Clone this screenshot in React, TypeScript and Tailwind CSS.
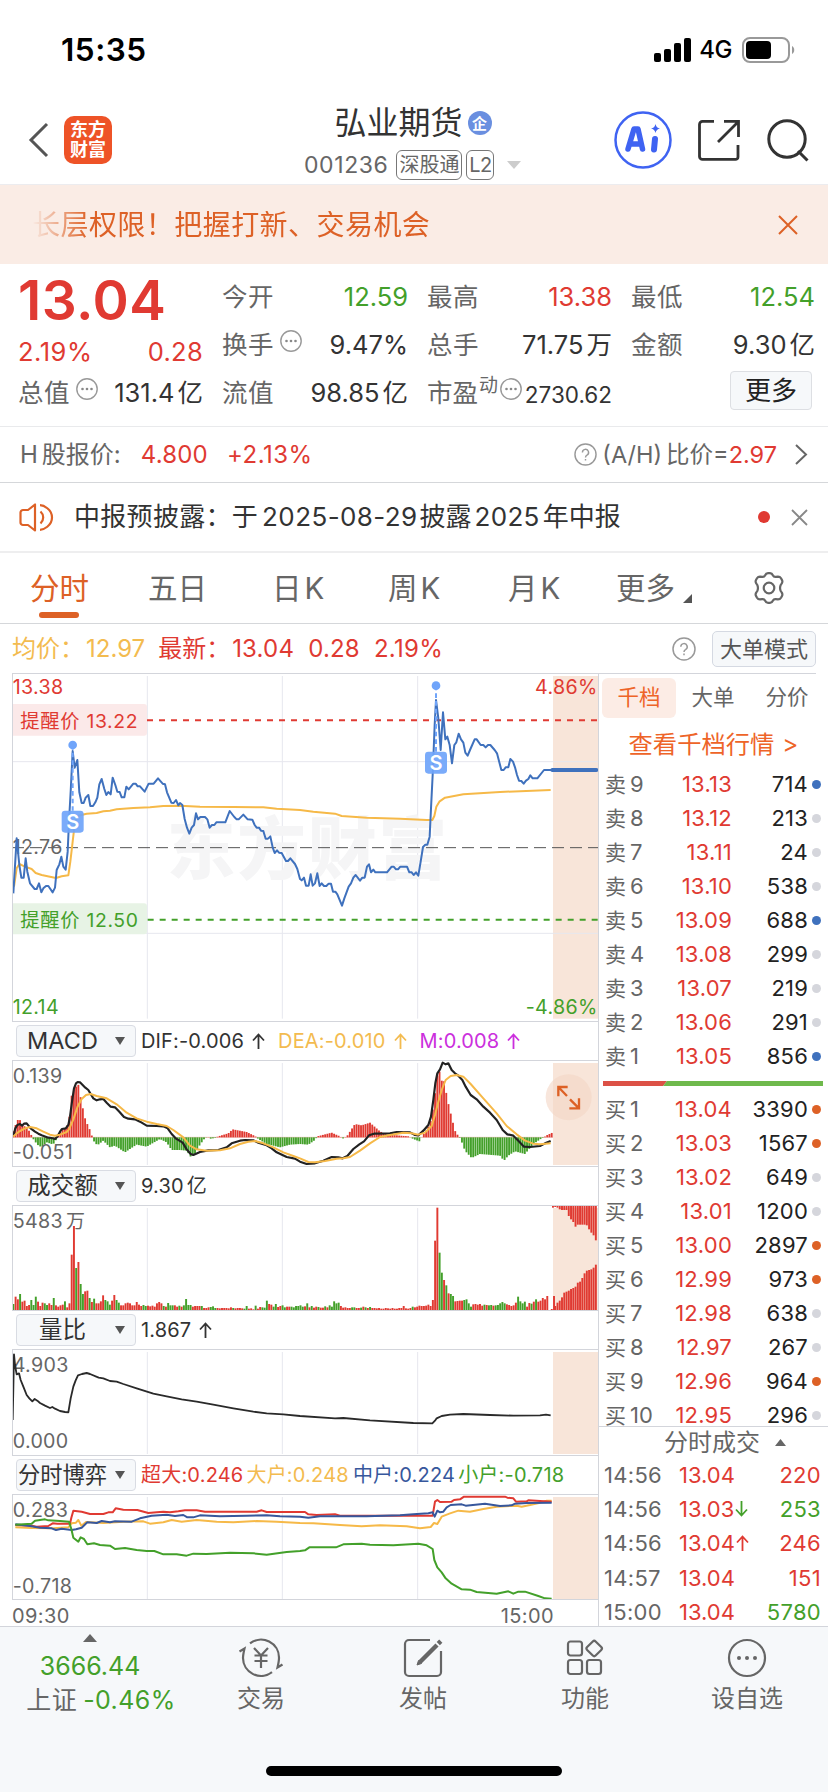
import type { ReactNode } from "react";
import clsx from "clsx";

const ORANGE = "#dd6126";
const RED = "#e03a32";
const GREEN = "#43a02a";
const BLUE = "#3f71bd";
const YELLOW = "#f6b948";
const LINE = "#e6e7ee";

const SELLS = [
  ["9", "13.13", "714", "b"],
  ["8", "13.12", "213", "g"],
  ["7", "13.11", "24", "g"],
  ["6", "13.10", "538", "g"],
  ["5", "13.09", "688", "b"],
  ["4", "13.08", "299", "g"],
  ["3", "13.07", "219", "g"],
  ["2", "13.06", "291", "g"],
  ["1", "13.05", "856", "b"],
];

const BUYS = [
  ["1", "13.04", "3390", "o"],
  ["2", "13.03", "1567", "o"],
  ["3", "13.02", "649", "g"],
  ["4", "13.01", "1200", "g"],
  ["5", "13.00", "2897", "o"],
  ["6", "12.99", "973", "o"],
  ["7", "12.98", "638", "g"],
  ["8", "12.97", "267", "g"],
  ["9", "12.96", "964", "o"],
  ["10", "12.95", "296", "g"],
];

const TRADES = [
  { time: "14:56", price: "13.04", dir: "", vol: "220", up: true },
  { time: "14:56", price: "13.03", dir: "down", vol: "253", up: false },
  { time: "14:56", price: "13.04", dir: "up", vol: "246", up: true },
  { time: "14:57", price: "13.04", dir: "", vol: "151", up: true },
  { time: "15:00", price: "13.04", dir: "", vol: "5780", up: false },
];

// Chart series use 3 units per CSS pixel.
const PRICE =
  "40,685 50,520 54,560 58,600 64,638 71,638 77,580 82,620 90,655 104,672 110,672 117,655 124,682 130,670 138,663 145,663 158,682 165,668 170,615 178,598 184,575 190,605 197,614 203,560 207,470 212,380 218,258 224,308 232,285 238,382 245,414 251,414 257,398 265,390 271,423 279,423 286,412 292,398 298,358 305,342 313,372 319,390 325,381 332,388 338,338 346,360 352,380 359,381 365,397 373,397 379,365 386,373 400,356 407,356 413,364 420,364 434,380 446,356 461,356 474,340 488,356 495,358 501,382 514,413 521,414 528,405 535,421 540,414 547,420 554,462 561,488 568,506 575,488 582,480 588,445 594,463 601,456 615,456 622,463 629,488 636,480 643,480 649,472 676,472 689,438 703,456 710,463 716,463 730,449 743,463 757,464 764,480 770,488 777,488 783,497 790,498 797,521 804,521 811,514 818,547 824,564 831,556 837,563 845,564 858,588 864,588 871,580 885,597 892,612 900,642 905,646 912,638 918,662 926,662 932,628 938,662 945,655 952,625 959,663 965,655 972,663 979,663 986,656 993,656 999,680 1006,680 1012,688 1026,722 1033,700 1046,665 1053,655 1060,638 1067,630 1080,647 1087,638 1094,638 1101,605 1107,598 1113,622 1120,614 1126,622 1161,622 1175,605 1181,605 1188,613 1194,613 1201,605 1221,605 1228,622 1235,622 1241,630 1248,622 1255,632 1262,590 1269,546 1276,539 1282,539 1289,515 1293,430 1298,330 1304,180 1308,105 1315,160 1322,255 1329,142 1336,223 1342,215 1349,240 1356,295 1363,240 1369,232 1376,206 1383,223 1390,233 1396,263 1403,272 1410,255 1424,223 1430,223 1442,240 1450,240 1457,247 1464,240 1471,240 1484,255 1491,265 1504,315 1511,315 1517,307 1525,307 1531,282 1539,290 1545,307 1551,330 1557,347 1564,348 1571,356 1578,347 1585,342 1591,331 1598,340 1612,340 1632,315 1655,315";

const AVERAGE =
  "42,665 50,610 58,597 75,605 95,612 107,624 125,630 150,635 168,639 185,634 205,631 211,590 218,530 225,470 235,452 260,446 290,444 310,439 330,437 350,433 400,429 450,427 490,423 540,422 600,425 700,426 790,427 830,431 900,435 940,440 1005,446 1025,453 1100,458 1200,461 1280,465 1297,465 1303,453 1309,425 1318,410 1335,398 1390,388 1500,381 1652,375";

const DIF =
  "40,348 46,325 52,315 60,312 66,317 72,311 80,310 92,325 105,335 115,341 125,346 145,353 155,354 165,357 172,350 180,335 186,327 197,325 205,315 210,290 216,245 222,205 228,190 233,186 240,187 248,195 256,203 265,210 272,222 280,235 290,241 300,238 310,237 320,248 332,260 345,262 358,275 372,291 385,296 405,298 420,305 440,317 470,318 490,319 503,325 515,342 527,355 548,368 560,388 572,402 580,405 600,396 625,391 655,390 680,382 695,370 720,362 735,360 760,361 775,368 800,376 815,385 830,397 860,411 885,416 900,425 920,432 945,430 970,422 995,411 1015,412 1028,415 1042,408 1060,387 1078,373 1092,364 1107,346 1122,341 1170,340 1190,336 1230,337 1245,345 1255,346 1270,332 1285,315 1293,290 1300,240 1306,190 1312,160 1320,148 1328,128 1337,133 1345,130 1355,150 1365,160 1375,167 1387,180 1397,200 1412,225 1430,238 1450,260 1470,278 1490,300 1508,330 1522,343 1540,347 1555,362 1572,380 1590,381 1620,378 1635,370 1652,363";

const DEA =
  "40,350 50,340 60,333 75,325 90,321 110,325 130,335 150,344 165,347 180,344 200,336 207,328 220,298 232,262 245,237 258,225 272,222 290,228 320,235 350,253 380,278 410,295 440,305 470,312 500,318 520,330 550,352 570,377 590,388 620,392 660,391 690,385 720,372 745,365 765,363 790,370 820,382 850,397 880,408 900,415 925,426 945,427 975,423 1010,416 1030,415 1050,411 1080,392 1110,370 1140,351 1170,345 1210,338 1235,340 1255,344 1275,338 1295,318 1305,285 1315,245 1325,210 1337,180 1352,168 1370,165 1390,170 1412,192 1450,235 1490,280 1520,318 1550,343 1575,362 1600,371 1620,373 1652,370";

// Histogram outline: x and signed height, positive is above the zero line.
const HIST: [number, number][] = [
  [40, 18], [52, 52], [60, 52], [70, 35], [80, 30], [87, 20], [95, 5], [100, -5], [112, -22], [125, -30], [140, -15], [155, -20],
  [165, -18], [172, 5], [180, 15], [190, 25], [200, 30], [208, 60], [215, 125], [221, 142], [228, 152], [236, 158], [241, 125], [248, 90],
  [255, 58], [262, 40], [270, 22], [276, 4], [282, -12], [292, -24], [310, -10], [330, -30], [345, -25], [375, -45], [390, -35],
  [410, -22], [440, -28], [480, -5], [500, -15], [515, -38], [540, -38], [560, -40], [572, -58], [585, -50], [600, -22], [615, -2],
  [625, 1], [632, -4], [645, -2], [655, 3], [685, 12], [698, 24], [740, 16], [765, 4], [775, -5], [800, -20], [840, -30], [870, -22],
  [900, -20], [925, -22], [945, -8], [952, 3], [995, 14], [1020, 3], [1028, -4], [1035, 0], [1042, 5], [1065, 40], [1085, 36], [1110, 44],
  [1140, 18], [1160, 8], [1190, 6], [1225, 3], [1240, -5], [1258, -12], [1265, 0], [1275, 15], [1290, 40], [1298, 80], [1304, 120],
  [1310, 180], [1318, 200], [1325, 170], [1333, 168], [1342, 115], [1355, 60], [1365, 20], [1375, 4], [1382, -5], [1395, -40],
  [1415, -62], [1440, -50], [1500, -55], [1512, -70], [1525, -55], [1545, -42], [1575, -50], [1600, -20], [1625, -3], [1632, 0],
  [1640, 6], [1657, 14],
];

const VOLUME =
  "g18 r40 r32 g48 r25 r28 r12 r15 g30 g15 g40 r25 r12 r22 g20 g15 r20 r15 g36 r14 r10 r14 r16 g26 r8 r20 r166 r252 g126 r144 g78 g48 r56 r58 g36 r24 g34 r20 r20 r26 r44 g30 g26 g16 r28 r45 g30 g22 r14 r14 r20 r22 r20 r14 r14 r24 r16 r12 g15 g12 " +
  "r13 r11 r13 r10 r20 r24 r20 g12 r10 g21 g14 g14 r14 r10 g13 r10 g14 g33 g15 g15 r10 r12 r12 r12 g12 r6 r6 r8 g9 g11 g6 r6 r5 r6 r6 r6 r5 r8 g6 r5 r6 r6 r5 g4 g12 r4 r5 r2 g13 r4 r9 g8 g7 g28 r18 r16 g10 g18 r9 r12 g14 g8 r10 r10 g10 g8 g12 g12 g14 " +
  "g10 r11 g20 r8 g12 r7 r10 g9 r7 r7 g11 r8 g14 g10 g26 g20 g22 r12 r7 r8 r6 r6 g8 g8 r6 r6 g7 r10 g8 r6 g9 r6 r6 r5 r6 r4 r4 r6 r5 r4 r6 r4 r4 r6 r6 r12 r5 r4 r6 g10 r8 r10 r13 r12 r12 r13 r16 r12 r30 r208 r307 g172 g112 r90 g74 r50 g48 g42 r26 r27 r28 r28 g30 g32 g20 g10 r17 r18 r16 r18 r13 " +
  "g16 r15 g14 g15 r13 g14 g15 g20 g24 g20 r17 r15 r12 r14 r22 g40 g26 g20 g25 r10 r21 g19 r25 g32 r25 r28 r36 r32 r42 r0 r3 r42";

const AUCTION_TOP = [5, 3, 5, 10, 12, 12, 12, 30, 40, 48, 62, 56, 56, 56, 56, 58, 70, 80, 88, 103];
const AUCTION_BOTTOM = [12, 22, 28, 38, 52, 55, 58, 63, 66, 70, 82, 85, 96, 110, 118, 120, 122, 127, 136];

const RATIO =
  "38,315 40,220 42,118 45,150 50,178 57,175 62,195 70,215 80,240 88,250 97,259 104,252 112,257 120,264 135,272 150,279 157,276 165,281 180,288 195,291 205,292 212,250 220,215 227,196 234,181 246,177 260,174 270,177 296,188 310,190 330,198 350,200 370,207 410,220 460,236 500,244 545,253 590,260 640,269 700,280 760,290 800,295 850,298 900,303 1005,310 1030,309 1110,316 1240,324 1297,325 1305,317 1310,310 1325,303 1350,299 1390,297 1470,300 1540,302 1620,301 1638,299 1652,301";

const HUGE =
  "46,630 95,632 110,635 145,633 158,625 172,626 210,626 214,608 220,587 245,590 270,597 310,597 325,592 338,592 347,580 370,584 412,585 445,594 470,592 490,590 510,592 535,589 555,586 590,586 615,590 770,590 785,586 800,591 915,591 925,598 950,600 1005,598 1020,602 1298,602 1305,560 1312,555 1320,561 1355,560 1362,555 1380,553 1392,545 1515,545 1522,548 1540,550 1548,560 1580,559 1585,556 1655,560";
const MIDDLE =
  "46,628 90,633 120,638 155,640 168,645 185,641 215,645 228,643 245,638 262,622 290,624 305,618 330,622 345,619 395,620 420,610 455,602 500,599 525,603 550,600 562,607 580,607 600,601 660,604 740,602 800,601 840,604 900,605 925,608 960,604 1100,604 1200,601 1240,598 1285,595 1298,592 1304,605 1312,587 1320,592 1330,590 1340,577 1352,570 1385,568 1397,572 1455,566 1500,573 1535,571 1545,566 1580,564 1655,563";
const BIG =
  "46,637 95,639 160,640 205,637 215,625 228,623 235,615 244,632 258,621 310,624 370,620 430,619 450,626 490,622 515,615 545,620 590,615 650,620 700,622 770,618 830,620 900,624 940,625 1020,630 1085,634 1140,631 1220,634 1260,640 1292,636 1302,624 1312,627 1325,605 1350,595 1375,587 1410,590 1450,582 1490,575 1550,572 1565,575 1590,570 1620,563 1640,557 1655,557";
const SMALL =
  "46,629 95,626 105,617 135,613 145,616 180,618 207,620 214,642 220,668 235,680 242,667 252,672 262,688 282,685 300,690 330,692 345,702 375,699 410,705 440,708 463,708 490,718 530,718 560,722 580,716 620,717 690,713 760,715 800,719 860,711 900,708 915,706 928,697 1008,697 1030,688 1085,686 1110,689 1180,691 1255,686 1280,691 1298,702 1303,735 1312,757 1325,772 1337,790 1355,806 1385,823 1410,824 1430,831 1490,836 1525,829 1540,836 1555,830 1575,830 1615,843 1635,850 1655,851";

function histAt(x: number) {
  for (let i = 1; i < HIST.length; i++) {
    const [x0, h0] = HIST[i - 1];
    const [x1, h1] = HIST[i];
    if (x <= x1) return h0 + ((h1 - h0) * (x - x0)) / (x1 - x0);
  }
  return 0;
}

const Line = ({ points, color, width = 5 }: { points: string; color: string; width?: number }) => (
  <polyline points={points} fill="none" stroke={color} strokeWidth={width} strokeLinejoin="round" />
);

const Label = ({ x, y, fill = "#666", end, children }: { x: number; y: number; fill?: string; end?: boolean; children: ReactNode }) => (
  <text x={x} y={y} fill={fill} fontSize={59} letterSpacing={1} textAnchor={end ? "end" : "start"}>
    {children}
  </text>
);

// Vertical grid lines and the shaded after-hours strip, shared by every panel.
const Grid = ({ top, height }: { top: number; height: number }) => (
  <>
    <rect x={1659} y={top} width={135} height={height} fill="#f8e5d9" />
    {[442, 847, 1253].map((x) => (
      <line key={x} x1={x} x2={x} y1={top} y2={top + height} stroke={LINE} strokeWidth={3} />
    ))}
  </>
);

const Marker = ({ x, dot, top }: { x: number; dot: number; top: number }) => (
  <g>
    <line x1={x} x2={x} y1={dot} y2={top} stroke="#6fa4fa" strokeWidth={6} strokeDasharray="14 9" />
    <circle cx={x} cy={dot} r={13} fill="#6fa4fa" />
    <rect x={x - 33} y={top} width={66} height={66} rx={10} fill="#6fa4fa" opacity={0.92} />
    <text x={x} y={top + 54} textAnchor="middle" fontSize={60} fontWeight={600} fill="#fff">S</text>
  </g>
);

const PriceChart = () => (
  <svg viewBox="39 27 1755 1041" className="block h-[347px] w-[585px]">
    <Grid top={33} height={1028} />
    <text x={500} y={626} fontSize={206} fontWeight={900} letterSpacing={6} fill="#f5f5f6">东方财富</text>
    <line x1={39} x2={1794} y1={290} y2={290} stroke={LINE} strokeWidth={3} />
    <line x1={39} x2={1794} y1={805} y2={805} stroke={LINE} strokeWidth={3} />
    <line x1={36} x2={1794} y1={548} y2={548} stroke="#555" strokeWidth={3} strokeDasharray="36 18" />
    <line x1={441} x2={1794} y1={166} y2={166} stroke={RED} strokeWidth={6} strokeDasharray="18 18" />
    <line x1={443} x2={1794} y1={764} y2={764} stroke={GREEN} strokeWidth={6} strokeDasharray="18 18" />
    <rect x={30} y={117} width={411} height={95} rx={9} fill="#fbe9e9" />
    <rect x={30} y={715} width={411} height={93} rx={9} fill="#e7f3e5" />
    <text x={61} y={188} fontSize={58} letterSpacing={2} fill={RED}>提醒价 13.22</text>
    <text x={61} y={787} fontSize={58} letterSpacing={2} fill={GREEN}>提醒价 12.50</text>
    <Label x={38} y={87} fill={RED}>13.38</Label>
    <Label x={38} y={1046} fill={GREEN}>12.14</Label>
    <Label x={1793} y={87} fill={RED} end>4.86%</Label>
    <Label x={1793} y={1046} fill={GREEN} end>-4.86%</Label>
    <Label x={38} y={567}>12.76</Label>
    <Line points={AVERAGE} color={YELLOW} width={6} />
    <Line points={PRICE} color={BLUE} width={6} />
    <line x1={1657} x2={1789} y1={315} y2={315} stroke={BLUE} strokeWidth={12} strokeLinecap="round" />
    <Marker x={218} dot={240} top={437} />
    <Marker x={1308} dot={62} top={260} />
  </svg>
);

const MacdChart = () => (
  <svg viewBox="39 123 1755 315" className="block h-[105px] w-[585px]">
    <Grid top={129} height={306} />
    <line x1={39} x2={1659} y1={352} y2={352} stroke="#eba9a0" strokeWidth={2} />
    {Array.from({ length: 241 }, (_, i) => {
      const x = 40 + i * 6.73;
      const h = histAt(x);
      return (
        <rect key={i} x={x - 2.9} y={h > 0 ? 352 - h : 352} width={5.6} height={Math.abs(h)} fill={h > 0 ? RED : GREEN} />
      );
    })}
    <Label x={38} y={189}>0.139</Label>
    <Label x={38} y={417}>-0.051</Label>
    <Line points={DIF} color="#222" width={6.5} />
    <Line points={DEA} color={YELLOW} width={6} />
    <circle cx={1706} cy={232} r={69} fill="#f3d5c4" opacity={0.6} />
    <path d="M1703 201h-28v28M1675 201l26 27M1737 235v30h-29M1737 265l-27-27" fill="none" stroke={ORANGE} strokeWidth={7} />
  </svg>
);

const VolumeChart = () => (
  <svg viewBox="39 558 1755 312" className="block h-[104px] w-[585px]">
    <Grid top={564} height={306} />
    <Label x={38} y={623}>5483</Label>
    <text x={198} y={623} fontSize={57} fill="#666">万</text>
    {VOLUME.split(" ").map((bar, i) => {
      const h = Number(bar.slice(1));
      return <rect key={i} x={37.2 + i * 6.73} y={870 - h} width={5.8} height={h} fill={bar[0] === "r" ? RED : GREEN} />;
    })}
    {AUCTION_TOP.map((h, i) => (
      <rect key={i} x={1656 + i * 6.77} y={558} width={5.8} height={h} fill={RED} />
    ))}
    {AUCTION_BOTTOM.map((h, i) => (
      <rect key={i} x={1662.8 + i * 6.77} y={870 - h} width={5.8} height={h} fill={RED} />
    ))}
  </svg>
);

const RatioChart = () => (
  <svg viewBox="39 105 1755 315" className="block h-[105px] w-[585px]">
    <Grid top={111} height={306} />
    <Label x={38} y={171}>4.903</Label>
    <Label x={38} y={399}>0.000</Label>
    <Line points={RATIO} color="#2a2a2a" width={5.5} />
  </svg>
);

const GameChart = () => (
  <svg viewBox="39 540 1755 312" className="block h-[104px] w-[585px]">
    <Grid top={546} height={306} />
    <Label x={38} y={605}>0.283</Label>
    <Label x={38} y={833}>-0.718</Label>
    <Line points={BIG} color={YELLOW} width={6} />
    <Line points={HUGE} color={RED} width={6} />
    <Line points={MIDDLE} color="#37579c" width={6} />
    <Line points={SMALL} color={GREEN} width={6} />
  </svg>
);

const StatusBar = () => (
  <div className="flex h-[88px] items-center justify-between pt-[12px] pl-[61px] pr-[32px] text-black">
    <span className="text-[31.500px] font-semibold tracking-[0.500px]">15:35</span>
    <div className="flex items-center">
      <svg width="37" height="24" viewBox="0 0 37 24">
        <rect x="0" y="15" width="7" height="9" rx="2" />
        <rect x="10" y="11" width="7" height="13" rx="2" />
        <rect x="20" y="5" width="7" height="19" rx="2" />
        <rect x="30" y="0" width="7" height="24" rx="2" />
      </svg>
      <span className="ml-2 text-[24px] font-medium tracking-[-0.5px]">4G</span>
      <svg className="ml-[10px]" width="54" height="26" viewBox="0 0 54 26">
        <rect x="1" y="1" width="46" height="24" rx="7" fill="none" stroke="#999" strokeWidth="2" />
        <rect x="4" y="4" width="25" height="18" rx="4" />
        <path d="M50 9c3 1.500 3 6.500 0 8z" fill="#999" />
      </svg>
    </div>
  </div>
);

const Header = () => (
  <header className="grid h-[97px] grid-cols-[1fr_236px_1fr] border-b border-[#ececef]">
    <div className="flex items-center pl-[28px] pt-[8px]">
      <svg width="21" height="36" viewBox="0 0 21 36" fill="none" stroke="#555" strokeWidth="3">
        <path d="M19 2L3 18l16 16" />
      </svg>
      <div className="ml-[15px] grid h-[48px] w-[48px] place-content-center rounded-[10px] bg-[#ee5327] text-center text-[18px] font-bold leading-[20px] text-white">
        <span>东方</span>
        <span>财富</span>
      </div>
    </div>
    <div className="flex flex-col items-center pt-[18px]">
      <div className="flex h-[34px] items-center pr-[2px] text-[32px] text-[#333]">
        弘业期货
        <span className="ml-[5px] grid h-6 w-6 place-content-center rounded-full bg-[#6a8fe0] text-[15px] font-bold text-white">企</span>
      </div>
      <div className="mt-[10px] flex h-[30px] w-[220px] items-center text-[23px] text-[#666]">
        <span className="tracking-[0.600px]">001236</span>
        <span className="ml-[8px] grid h-[30px] w-[66px] place-content-center rounded-[6px] border border-[#777] text-[20px]">深股通</span>
        <span className="ml-1 grid h-[30px] w-[28px] place-content-center rounded-[6px] border border-[#777] text-[20px] tracking-[-0.5px]">L2</span>
        <svg className="ml-[13px]" width="14" height="8" viewBox="0 0 14 8"><path d="M0 0h14L7 8z" fill="#ccc" /></svg>
      </div>
    </div>
    <div className="flex items-center justify-end pr-[18px] pt-[8px]">
      <svg width="58" height="58" viewBox="0 0 58 58">
        <circle cx="29" cy="29" r="27.500" fill="none" stroke="#3f63f2" strokeWidth="2.500" />
        <g fill="none" stroke="#3f63f2" strokeWidth="5.500" strokeLinecap="round" strokeLinejoin="round">
          <path d="M14 38l6-20h4l4.500 20M16.500 33h10" />
          <path d="M41 28l-1 10.500" strokeWidth="6" />
        </g>
        <path d="M41.500 13q.8 4 4.500 4.500-3.700.8-4.500 4.500-.8-3.700-4.500-4.500 3.700-.5 4.500-4.500z" fill="#3f63f2" />
      </svg>
      <svg className="ml-[26px]" width="42" height="42" viewBox="0 0 42 42" fill="none" stroke="#333" strokeWidth="2.800">
        <path d="M16 2.400H4.500a3 3 0 0 0-3 3v32a3 3 0 0 0 3 3h33a2.500 2.500 0 0 0 2.500-2.500V26M26 2.400h14.500V18M39.500 3.500L20 23" />
      </svg>
      <svg className="ml-[27px]" width="43" height="43" viewBox="0 0 43 43" fill="none" stroke="#333" strokeWidth="3">
        <circle cx="20" cy="20" r="18.200" />
        <path d="M31 32l9.500 9.500" />
      </svg>
    </div>
  </header>
);

const Banner = () => (
  <div className="flex h-[79px] items-center justify-between bg-[#faece5] pl-[32px] pr-[30px]">
    <span className="text-[28px] tracking-[0.450px] text-[#dd6126] [mask-image:linear-gradient(to_right,transparent,black_56px)]">
      长层权限！把握打新、交易机会
    </span>
    <svg width="20" height="20" viewBox="0 0 20 20" stroke={ORANGE} strokeWidth="2"><path d="M1 1l18 18M19 1L1 19" /></svg>
  </div>
);

const Dots = ({ className }: { className?: string }) => (
  <svg className={clsx("shrink-0", className)} width="22" height="22" viewBox="0 0 22 22">
    <circle cx="11" cy="11" r="10.200" fill="none" stroke="#999" strokeWidth="1.400" />
    <circle cx="6.500" cy="11" r="1.300" fill="#888" />
    <circle cx="11" cy="11" r="1.300" fill="#888" />
    <circle cx="15.500" cy="11" r="1.300" fill="#888" />
  </svg>
);

const Stat = ({ label, value, unit, tone = "text-[#333]", info }: { label: string; value: string; unit?: string; tone?: string; info?: boolean }) => (
  <div className="flex h-[48px] items-center whitespace-nowrap">
    <span className="tracking-[0.400px] text-[#666]">{label}</span>
    {info && <Dots className="mb-[9px] ml-[6px]" />}
    <span className={clsx("ml-auto", tone)}>
      {value}
      {unit && <span className="ml-[3px]">{unit}</span>}
    </span>
  </div>
);

const Quote = () => (
  <section className="flex h-[163px] border-b border-[#e9eaec] pl-[18px] text-[25.500px]">
    <div className="w-[185px] text-[#e03a32]">
      <div className="flex h-[72px] items-center text-[55px] font-semibold tracking-[0.500px]">13.04</div>
      <div className="flex h-[32px] items-center justify-between">
        <span className="tracking-[0.500px]">2.19%</span>
        <span className="tracking-[0.300px]">0.28</span>
      </div>
      <div className="pt-[1px]">
        <Stat label="总值" value="131.4" unit="亿" info />
      </div>
    </div>
    <div className="ml-[19px] grid h-[153px] grid-cols-[186px_185px_184px] content-start gap-x-[19px] pt-[9px]">
      <Stat label="今开" value="12.59" tone="text-[#43a02a]" />
      <Stat label="最高" value="13.38" tone="text-[#e03a32]" />
      <Stat label="最低" value="12.54" tone="text-[#43a02a]" />
      <Stat label="换手" value="9.47%" info />
      <Stat label="总手" value="71.75" unit="万" />
      <Stat label="金额" value="9.30" unit="亿" />
      <Stat label="流值" value="98.85" unit="亿" />
      <div className="flex h-[48px] items-center whitespace-nowrap text-[#666]">
        市盈<span className="mb-[16px] ml-[1px] text-[19px]">动</span>
        <Dots className="mb-[9px] ml-[2px]" />
        <span className="ml-auto pt-1 text-[22.500px] text-[#333]">2730.62</span>
      </div>
      <div className="flex h-[43px] items-center justify-end pr-[3px]">
        <button className="h-[39px] w-[82px] rounded-[4px] border border-[#dddfe3] bg-[#f6f8fa] text-[26px] leading-none text-[#222]">更多</button>
      </div>
    </div>
  </section>
);

const Help = ({ size }: { size: number }) => (
  <svg width={size} height={size} viewBox="0 0 24 24" fill="none" stroke="#999" strokeWidth="1.500">
    <circle cx="12" cy="12" r="11" />
    <path d="M8.800 9.800a3.200 3.200 0 1 1 4.700 2.800c-1 .5-1.500 1-1.500 2.400M12 16.600v1.700" />
  </svg>
);

const HShare = () => (
  <div className="flex h-[56px] items-center border-b border-[#d5d7da] pl-[20px] pr-[20px] text-[24px] text-[#666]">
    <span className="mr-1">H</span>股报价:
    <span className="ml-[20px] tracking-[0.200px] text-[#e03a32]">4.800</span>
    <span className="ml-[19px] tracking-[0.500px] text-[#e03a32]">+2.13%</span>
    <span className="ml-auto flex items-center text-[23.500px]">
      <Help size={23} />
      <span className="ml-[5px]">(A/H)</span>
      <span className="ml-[4px]">比价=<span className="text-[#e03a32]">2.97</span></span>
    </span>
    <svg className="ml-[18px]" width="13" height="21" viewBox="0 0 13 21" fill="none" stroke="#666" strokeWidth="2"><path d="M1 1l10 9.500L1 20" /></svg>
  </div>
);

const News = () => (
  <div className="flex h-[70px] items-center border-b-2 border-[#eeeeef] pl-[19px] pr-[20px] text-[26px] text-[#333]">
    <svg width="35" height="29" viewBox="0 0 35 29" fill="none" stroke={ORANGE} strokeWidth="2.200" strokeLinejoin="round">
      <path d="M16 1.500v26l-7-5.500H4a2.500 2.500 0 0 1-2.500-2.500v-10A2.500 2.500 0 0 1 4 7h5z" />
      <path d="M21.500 8.500c3.600 3.300 3.600 8.700 0 12M21 2.200c3.500 0 12 4 12 12.300s-8.500 12.300-12 12.300" />
    </svg>
    <span className="ml-[20px] tracking-[0.300px]">中报预披露：于</span>
    <span className="ml-[4px] tracking-[0.400px]">2025-08-29</span>
    <span className="ml-[2px]">披露</span>
    <span className="ml-[3px] tracking-[0.300px]">2025</span>
    <span className="ml-[3px]">年中报</span>
    <span className="ml-auto h-3 w-3 rounded-full bg-[#e03a32]" />
    <svg className="ml-[21px]" width="17" height="17" viewBox="0 0 17 17" stroke="#888" strokeWidth="1.800"><path d="M1 1l15 15M16 1L1 16" /></svg>
  </div>
);

const Tabs = () => (
  <nav className="flex h-[71px] items-center border-b border-[#d5d7da] pl-[30px] pt-[2px] text-[29.500px] text-[#666]">
    <span className="relative w-[118px] text-[#dd6126]">
      分时
      <span className="absolute -bottom-[14px] left-[9px] h-[6px] w-[40px] rounded-full bg-[#dd6126]" />
    </span>
    <span className="w-[124px]">五日</span>
    <span className="w-[116px]">日<span className="ml-[3px]">K</span></span>
    <span className="w-[120px]">周<span className="ml-[3px]">K</span></span>
    <span className="w-[108px]">月<span className="ml-[3px]">K</span></span>
    <span>更多</span>
    <svg className="ml-[8px] mt-[19px]" width="9" height="9" viewBox="0 0 9 9"><path d="M9 0v9H0z" fill="#555" /></svg>
    <svg className="-mt-[2px] ml-[60px]" width="34" height="32" viewBox="0 0 34 32" fill="none" stroke="#666" strokeWidth="2.200" strokeLinejoin="round">
      <path d="M13 3.500q1-2.300 3-2.300h2q2 0 3 2.300.8 1.700 2.800 1.400l2.200-.3q2 0 3 1.700l1 1.800q.9 1.700-.3 3.400l-1 1.500q-1.300 3 0 6l1 1.500q1.200 1.700.3 3.400l-1 1.800q-1 1.700-3 1.700l-2.200-.3q-2-.3-2.800 1.400-1 2.300-3 2.300h-2q-2 0-3-2.300-.8-1.700-2.800-1.400l-2.200.3q-2 0-3-1.700l-1-1.800q-.9-1.700.3-3.400l1-1.500q1.300-3 0-6l-1-1.500q-1.200-1.700-.3-3.400l1-1.800q1-1.700 3-1.700l2.200.3q2 .3 2.800-1.400z" />
      <circle cx="17" cy="16" r="5.300" />
    </svg>
  </nav>
);

const Summary = () => (
  <div className="flex h-[49px] items-center pl-[12px] pr-[12px] text-[24px]">
    <span className="text-[#f3bb4f]">均价：</span>
    <span className="ml-[2px] text-[#f3bb4f]">12.97</span>
    <span className="ml-[13px] text-[#e03a32]">最新：</span>
    <span className="ml-[2px] tracking-[0.200px] text-[#e03a32]">13.04</span>
    <span className="ml-[14px] tracking-[0.200px] text-[#e03a32]">0.28</span>
    <span className="ml-[14px] tracking-[0.300px] text-[#e03a32]">2.19%</span>
    <span className="ml-auto mr-[16px]"><Help size={24} /></span>
    <button className="h-[36px] w-[104px] rounded-[5px] border border-[#d5d9e2] bg-[#f6f8fa] text-[22px] leading-none text-[#555]">大单模式</button>
  </div>
);

const PanelHead = ({ title, children }: { title: string; children: ReactNode }) => (
  <div className="flex h-[38px] items-center pl-[4px] text-[20px] text-[#333]">
    <div
      className={clsx(
        "flex h-[32px] w-[120px] shrink-0 items-center rounded-[4px] border border-[#d9dce3] bg-[#f6f8fa] text-[#333]",
        title === "分时博弈" ? "text-[22.300px]" : "text-[23.500px]"
      )}
    >
      <span className="w-[91px] whitespace-nowrap text-center">{title}</span>
      <svg className="ml-[7px]" width="10" height="8" viewBox="0 0 10 8"><path d="M0 0h10L5 8z" fill="#555" /></svg>
    </div>
    <div className="ml-[5px] flex items-center whitespace-nowrap tracking-[0.150px]">{children}</div>
  </div>
);

const Arrow = ({ down, className }: { down?: boolean; className?: string }) => (
  <svg className={clsx(className, down && "rotate-180")} width="13" height="16" viewBox="0 0 13 16" fill="none" stroke="currentColor" strokeWidth="1.800">
    <path d="M6.500 16V2M1 7.500l5.500-6 5.500 6" />
  </svg>
);

const Panel = ({ children }: { children: ReactNode }) => (
  <div className="w-[586px] border-y border-l border-[#d3d5db]">{children}</div>
);

const DOTS: Record<string, string> = { b: "bg-[#3f71bd]", g: "bg-[#d5d6dc]", o: "bg-[#dd6126]" };

const Level = ({ side, row }: { side: string; row: string[] }) => (
  <div className="flex h-[34px] items-center text-[22px]">
    <span className="w-[25px] text-[21px] text-[#666]">{side}</span>
    <span className="text-[#666]">{row[0]}</span>
    <span className="ml-auto w-[70px] text-right tracking-[0.200px] text-[#e03a32]">{row[1]}</span>
    <span className="w-[76px] text-right tracking-[0.200px] text-[#222]">{row[2]}</span>
    <span className={clsx("ml-[4px] h-[9px] w-[9px] rounded-full", DOTS[row[3]])} />
  </div>
);

const Book = () => (
  <aside className="flex h-[953px] w-[230px] flex-col border-l border-[#d3d5db]">
    <div className="mr-3 shrink-0 border-t border-[#d3d5db]" />
    <div className="mt-[4px] flex h-[40px] shrink-0 pl-[3px] text-[21.500px] text-[#666]">
      <span className="grid w-[74px] place-content-center rounded-[6px] bg-[#fcece5] text-[#ee6428]">千档</span>
      <span className="grid w-[74px] place-content-center">大单</span>
      <span className="grid w-[74px] place-content-center">分价</span>
    </div>
    <div className="flex h-[49px] shrink-0 items-center justify-center pt-[4px] text-[24.300px] text-[#ee6428]">
      查看千档行情<span className="ml-[8px]">&gt;</span>
    </div>
    <div className="shrink-0 pl-[6px] pr-[7px]">
      {SELLS.map((row) => <Level key={row[0]} side="卖" row={row} />)}
    </div>
    <svg className="ml-[4px] mt-[8px] shrink-0" width="220" height="5" viewBox="0 0 220 5">
      <path d="M0 0h64l-4 5H0z" fill="#dc5146" />
      <path d="M64 0h156v5H60z" fill="#6fb94c" />
    </svg>
    <div className="h-[341px] shrink-0 border-b border-[#d3d5db] pl-[6px] pr-[7px] pt-[6px]">
      {BUYS.map((row) => <Level key={row[0]} side="买" row={row} />)}
    </div>
    <div className="flex h-[31px] shrink-0 items-center pl-[65px] text-[24px] text-[#666]">
      分时成交
      <svg className="ml-[15px]" width="11" height="7" viewBox="0 0 11 7"><path d="M0 7h11L5.500 0z" fill="#666" /></svg>
    </div>
    <div className="h-[168px] shrink-0 pl-[5px] pr-[7px]">
      {TRADES.map((t, i) => (
        <div key={i} className="flex h-[34.200px] items-center text-[22px]">
          <span className="w-[75px] tracking-[0.300px] text-[#666]">{t.time}</span>
          <span className="text-[#e03a32]">{t.price}</span>
          {t.dir && <Arrow down={t.dir === "down"} className={clsx("ml-[1px]", t.dir === "down" ? "text-[#43a02a]" : "text-[#e03a32]")} />}
          <span className={clsx("ml-auto tracking-[0.300px]", t.up ? "text-[#e03a32]" : "text-[#43a02a]")}>{t.vol}</span>
        </div>
      ))}
    </div>
  </aside>
);

const Charts = () => (
  <div className="flex h-[953px]">
    <div className="w-[598px] shrink-0 pl-[12px]">
      <Panel><PriceChart /></Panel>
      <PanelHead title="MACD">
        <span>DIF:-0.006</span>
        <Arrow className="ml-[8px]" />
        <span className="ml-[13px] text-[#f3bb4f]">DEA:-0.010</span>
        <Arrow className="ml-[8px] text-[#f3bb4f]" />
        <span className="ml-[13px] text-[#cb2fdd]">M:0.008</span>
        <Arrow className="ml-[8px] text-[#cb2fdd]" />
      </PanelHead>
      <Panel><MacdChart /></Panel>
      <PanelHead title="成交额">
        <span>9.30</span>
        <span className="ml-[3px]">亿</span>
      </PanelHead>
      <Panel><VolumeChart /></Panel>
      <PanelHead title="量比">
        <span>1.867</span>
        <Arrow className="ml-[8px]" />
      </PanelHead>
      <Panel><RatioChart /></Panel>
      <PanelHead title="分时博弈">
        <span className="tracking-[0.200px] text-[#e03a32]">超大:0.246</span>
        <span className="ml-[3px] tracking-[0.200px] text-[#f3bb4f]">大户:0.248</span>
        <span className="ml-[4px] tracking-[0.200px] text-[#37579c]">中户:0.224</span>
        <span className="ml-[3px] tracking-[0.200px] text-[#43a02a]">小户:-0.718</span>
      </PanelHead>
      <Panel><GameChart /></Panel>
      <div className="flex h-[26px] items-center justify-between pr-[44px] pt-[6px] text-[20px] tracking-[0.400px] text-[#666]">
        <span>09:30</span>
        <span>15:00</span>
      </div>
    </div>
    <Book />
  </div>
);

const NavItem = ({ label, children }: { label: string; children: ReactNode }) => (
  <div className="flex w-[162px] flex-col items-center">
    <svg width="46" height="40" viewBox="0 0 46 40" fill="none" stroke="#666" strokeWidth="2.200">{children}</svg>
    <span className="mt-[9px] text-[24px] text-[#666]">{label}</span>
  </div>
);

const BottomNav = () => (
  <footer className="h-[166px] border-t border-[#d3d5db] bg-[#f6f8fa]">
    <div className="flex h-[139px] pt-[11px]">
      <div className="flex w-[180px] flex-col items-center text-[25px] text-[#43a02a]">
        <svg className="-mt-[4px]" width="14" height="8" viewBox="0 0 14 8"><path d="M0 8h14L7 0z" fill="#666" /></svg>
        <span className="mt-[12px]">3666.44</span>
        <span className="mt-[9px] whitespace-nowrap pl-[22px] tracking-[0.400px]"><span className="mr-[6px] text-[#666]">上证</span>-0.46%</span>
      </div>
      <NavItem label="交易">
        <path d="M12 5.400A18 18 0 0 1 41 20q0 3-1.500 9.500l5-3M34 34.200A18 18 0 0 1 5 20q0-3 1.500-9.500l-5 3" />
        <path d="M16 10l7 7.500 7-7.500M23 17v13M16.500 17.500h13M16.500 23h13" />
      </NavItem>
      <NavItem label="发帖">
        <path d="M30 2H9a4 4 0 0 0-4 4v28a4 4 0 0 0 4 4h28a4 4 0 0 0 4-4V13" />
        <path d="M37 7L20 24" strokeWidth="4.500" />
        <path d="M17 27l1.500-4.500 3 3z" fill="#666" strokeWidth="1" />
        <path d="M38.300 5.700l2.500-2.500" strokeWidth="4.500" />
      </NavItem>
      <NavItem label="功能">
        <rect x="6" y="3.500" width="14" height="14" rx="2.500" />
        <rect x="6" y="22" width="14" height="14" rx="2.500" />
        <rect x="25" y="22" width="14" height="14" rx="2.500" />
        <rect x="26.200" y="4.500" width="12" height="12" rx="2" transform="rotate(45 32.200 10.500)" />
      </NavItem>
      <NavItem label="设自选">
        <circle cx="23" cy="20" r="18" />
        <g fill="#666" stroke="none"><circle cx="15" cy="20" r="2" /><circle cx="23" cy="20" r="2" /><circle cx="31" cy="20" r="2" /></g>
      </NavItem>
    </div>
    <div className="mx-auto h-[10px] w-[296px] rounded-full bg-black" />
  </footer>
);

export default function App() {
  return (
    <div className="h-[1792px] w-[828px] overflow-hidden bg-white font-['Inter','Noto_Sans_CJK_SC',sans-serif] leading-none">
      <StatusBar />
      <Header />
      <Banner />
      <Quote />
      <HShare />
      <News />
      <Tabs />
      <Summary />
      <Charts />
      <BottomNav />
    </div>
  );
}
